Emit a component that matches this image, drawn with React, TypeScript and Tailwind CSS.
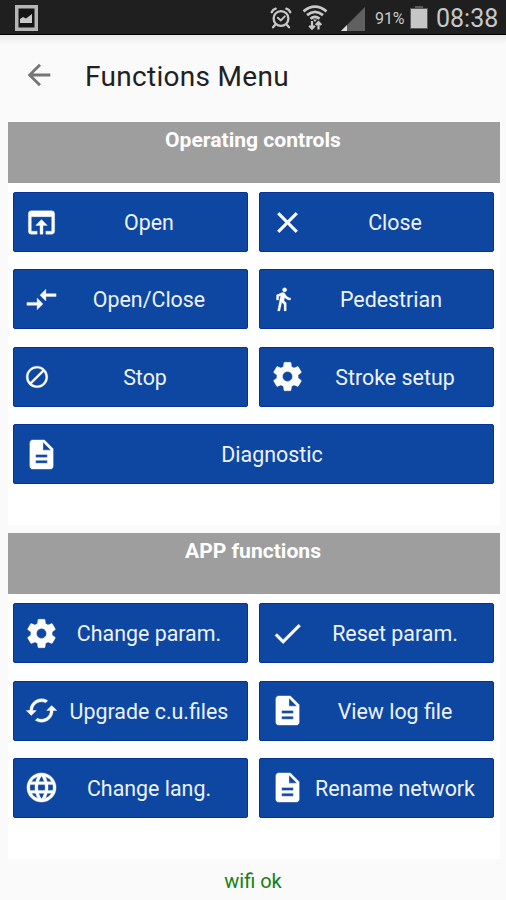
import type { ComponentType } from "react";
import {
  MdArrowBack,
  MdBlock,
  MdClose,
  MdCompareArrows,
  MdDescription,
  MdDirectionsWalk,
  MdDone,
  MdLanguage,
  MdOpenInBrowser,
} from "react-icons/md";

interface MenuItem {
  label: string;
  icon: ComponentType<{ className?: string }>;
  small?: boolean;
  wide?: boolean;
}

function GearIcon({ className }: { className?: string }) {
  return (
    <svg className={className} viewBox="-0.3 -0.3 24.6 24.6" fill="currentColor">
      <path d="M19.43 12.98c.04-.32.07-.64.07-.98s-.03-.66-.07-.98l2.11-1.65c.19-.15.24-.42.12-.64l-2-3.46c-.12-.22-.39-.3-.61-.22l-2.49 1c-.52-.4-1.08-.73-1.69-.98l-.38-2.65C14.46 2.18 14.25 2 14 2h-4c-.25 0-.46.18-.49.42l-.38 2.65c-.61.25-1.17.59-1.69.98l-2.49-1c-.23-.09-.49 0-.61.22l-2 3.46c-.13.22-.07.49.12.64l2.11 1.65c-.04.32-.07.65-.07.98s.03.66.07.98l-2.11 1.65c-.19.15-.24.42-.12.64l2 3.46c.12.22.39.3.61.22l2.49-1c.52.4 1.08.73 1.69.98l.38 2.65c.03.24.24.42.49.42h4c.25 0 .46-.18.49-.42l.38-2.65c.61-.25 1.17-.59 1.69-.98l2.49 1c.23.09.49 0 .61-.22l2-3.46c.12-.22.07-.49-.12-.64l-2.11-1.65zM12 15.5c-1.93 0-3.5-1.57-3.5-3.5s1.57-3.5 3.5-3.5 3.5 1.57 3.5 3.5-1.57 3.5-3.5 3.5z" />
    </svg>
  );
}

function RefreshIcon({ className }: { className?: string }) {
  return (
    <svg className={className} viewBox="0 0 24 24" fill="currentColor">
      <path d="M19 8.6l-3.5 3.4H18c0 3.31-2.69 6-6 6-1.01 0-1.97-.25-2.8-.7l-1.46 1.46C8.97 19.54 10.43 20 12 20c4.42 0 8-3.58 8-8h2.5L19 8.6zM6 12c0-3.31 2.69-6 6-6 1.01 0 1.97.25 2.8.7l1.46-1.46C15.03 4.46 13.57 4 12 4c-4.42 0-8 3.58-8 8H1.5L5 15.4 8.5 12H6z" />
    </svg>
  );
}

const OPERATING_CONTROLS: MenuItem[] = [
  { label: "Open", icon: MdOpenInBrowser },
  { label: "Close", icon: MdClose },
  { label: "Open/Close", icon: MdCompareArrows },
  { label: "Pedestrian", icon: MdDirectionsWalk, small: true },
  { label: "Stop", icon: MdBlock, small: true },
  { label: "Stroke setup", icon: GearIcon },
  { label: "Diagnostic", icon: MdDescription, wide: true },
];

const APP_FUNCTIONS: MenuItem[] = [
  { label: "Change param.", icon: GearIcon },
  { label: "Reset param.", icon: MdDone },
  { label: "Upgrade c.u.files", icon: RefreshIcon },
  { label: "View log file", icon: MdDescription },
  { label: "Change lang.", icon: MdLanguage },
  { label: "Rename network", icon: MdDescription },
];

function StatusBar() {
  return (
    <div className="flex h-[35px] shrink-0 items-center border-b border-black bg-[#1f1f1f] text-[#c8c8c8]">
      <svg className="ml-[15px] mt-0.5 h-[26px] w-[23px]" viewBox="0 0 23 26">
        <rect x="1.75" y="1.75" width="19.5" height="22.5" fill="#151515" stroke="#b5b5b5" strokeWidth="3.5" />
        <path d="M5 18v-4l3-2 3 1.5 6-4.5v9z" fill="#c9c9c9" />
      </svg>

      <svg
        className="ml-auto mr-[10px] mt-px h-[22px] w-[22px]"
        viewBox="0 0 22 22"
        fill="none"
        stroke="currentColor"
        strokeWidth="2.3"
        strokeLinecap="round"
      >
        <circle cx="11" cy="11.5" r="7.4" />
        <path d="M1.7 5.2Q2.8 2.5 5.7 1.7M20.3 5.2Q19.2 2.5 16.3 1.7M5 18l-2 2.3M17 18l2 2.3" />
        <path d="M7.8 10.8l3 2.6 4-4" strokeWidth="2" />
      </svg>

      <svg className="mr-[13px] mt-px h-[26px] w-[26px]" viewBox="0 0 26 26" fill="none" stroke="currentColor">
        <path d="M1.5 6.3Q13-3 24.5 6.3M5 10.2Q13 3.6 21 10.2M8.5 13.8Q13 10 17.5 13.8" strokeWidth="2.8" />
        <path d="M11 14.5h4l-2 2.5z" fill="currentColor" stroke="none" />
        <path d="M10 16v7M7.2 20.7l2.8 3 2.8-3M16.5 24.5v-7M13.7 20l2.8-3 2.8 3" strokeWidth="2.2" />
      </svg>

      <svg className="mr-[10px] mt-1 h-6 w-6" viewBox="0 0 24 24">
        <path d="M0 24L24 0v24z" fill="#606060" />
        <path d="M0 24l6-6v6z" fill="#dedede" />
      </svg>

      <span className="mr-[3px] mt-[3px] w-[32px] whitespace-nowrap text-[16px] leading-none tracking-[-0.1px]">91%</span>

      <svg className="mr-[8px] h-[23px] w-[18px]" viewBox="0 0 18 23">
        <path d="M5 0h8v2h5v21H0V2h5z" fill="#5a5a5a" />
        <path d="M1 3h16v19H1z" fill="#c6c6c6" />
      </svg>

      <span className="mr-[8px] mt-0.5 w-[62px] whitespace-nowrap text-[25px] leading-none">08:38</span>
    </div>
  );
}

function MenuButton({ label, icon: Icon, small, wide }: MenuItem) {
  return (
    <button
      type="button"
      className={`flex h-[60px] items-center rounded-[2px] border border-[#06309a] bg-[#0d47a1] text-white ${
        wide ? "col-span-2" : ""
      }`}
    >
      <span className="flex w-[55px] shrink-0 pl-[10px] [&_path:last-child]:stroke-current [&_path:last-child]:[stroke-width:0.25]">
        <Icon className={small ? "h-[26px] w-[26px]" : "h-[35px] w-[35px]"} />
      </span>
      <span
        className={`mt-0.5 flex-1 whitespace-nowrap text-center text-[21.4px] leading-7 text-[#eef2ff] ${
          small ? "-ml-[26px]" : "-ml-[18px]"
        }`}
      >
        {label}
      </span>
    </button>
  );
}

function Section({ title, items }: { title: string; items: MenuItem[] }) {
  return (
    <section className="bg-white">
      <h2 className="h-[61px] bg-[#9e9e9e] pr-0.5 pt-1 text-center text-[21.1px] font-bold leading-7 text-white">
        {title}
      </h2>
      <div className="grid grid-cols-2 gap-x-[11px] gap-y-[17.4px] pb-[41px] pl-[5px] pr-[6px] pt-[9px]">
        {items.map((item) => (
          <MenuButton key={item.label} {...item} />
        ))}
      </div>
    </section>
  );
}

export default function App() {
  return (
    <div className="flex h-[900px] w-[506px] flex-col overflow-hidden bg-[#fafafa] font-['Roboto',sans-serif]">
      <StatusBar />
      <header className="flex h-[87px] shrink-0 items-center bg-linear-to-b from-[#e8e8e8] to-[#fafafa] to-10% pb-[5px] pl-[22px]">
        <MdArrowBack className="mb-[3px] h-[34px] w-[34px] text-[#757575]" />
        <h1 className="ml-[29px] mt-0.5 text-[28px] leading-none tracking-[0.3px] text-[#212121]">Functions Menu</h1>
      </header>
      <main className="flex flex-col gap-2 pl-2 pr-1.5">
        <Section title="Operating controls" items={OPERATING_CONTROLS} />
        <Section title="APP functions" items={APP_FUNCTIONS} />
      </main>
      <footer className="pt-2 text-center text-[20px] leading-7 text-[#128012]">wifi ok</footer>
    </div>
  );
}
